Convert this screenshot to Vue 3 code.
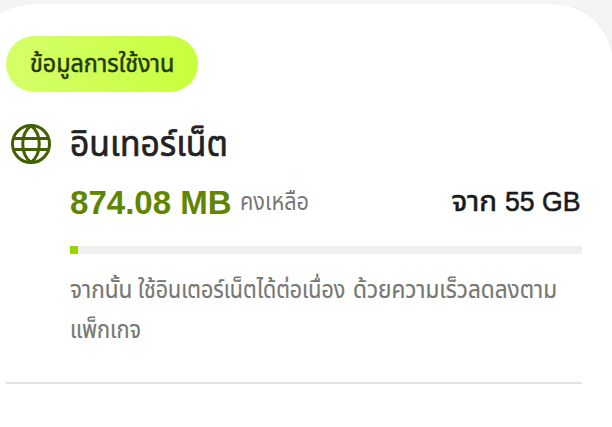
<script setup>
const usage = {
  badge: 'ข้อมูลการใช้งาน',
  title: 'อินเทอร์เน็ต',
  remaining: '874.08 MB',
  remainingLabel: 'คงเหลือ',
  totalLabel: 'จาก',
  total: '55 GB',
  note: ['จากนั้น', 'ใช้อินเตอร์เน็ตได้ต่อเนื่อง', 'ด้วยความเร็วลดลงตาม', 'แพ็กเกจ'],
  percent: 1.5625,
}
</script>

<template>
  <main class="screen">
    <section class="card">
      <div class="badge"><span class="badge-text">{{ usage.badge }}</span></div>
      <div class="usage">
        <svg class="globe" viewBox="0 0 42 42" fill="none" stroke="#445f00" stroke-width="3">
          <circle cx="21" cy="21" r="18.5" />
          <path d="M21 2.5C10 11 10 31 21 39.500M21 2.500C32 11 32 31 21 39.500M3.500 15.500h35M3.500 26.500h35" />
        </svg>
        <div class="details">
          <h1 class="title">{{ usage.title }}</h1>
          <div class="amounts">
            <strong class="remaining">{{ usage.remaining }}</strong>
            <span class="remaining-label">{{ usage.remainingLabel }}</span>
            <span class="total"><span class="total-label">{{ usage.totalLabel }}</span><span class="total-value">{{ usage.total }}</span></span>
          </div>
          <div class="track"><div class="fill" :style="{ width: usage.percent + '%' }"></div></div>
          <p class="note"><span v-for="part in usage.note" :key="part" class="note-part">{{ part }}</span></p>
        </div>
      </div>
      <hr class="divider" />
    </section>
  </main>
</template>

<style>
body { margin: 0; background: #f4f4f4; }
</style>

<style scoped>
.screen {
  box-sizing: border-box;
  width: 612px;
  height: 427px;
  padding-top: 4px;
  overflow: hidden;
  background: #f4f4f4;
  font-family: "Liberation Sans", "Noto Sans Thai", "Noto Sans", sans-serif;
}
.card {
  box-sizing: border-box;
  width: 640px;
  height: 520px;
  margin-left: -27px;
  padding: 32px 31px 0 33px;
  border-radius: 60px;
  background: #fff;
  box-shadow: 0 0 1px #ddd;
}
.badge {
  display: flex;
  align-items: center;
  justify-content: center;
  width: 192px;
  height: 56px;
  border-radius: 28px;
  background: linear-gradient(90deg, #d5ff6a, #c8ff3c);
  color: #243800;
  font-size: 24px;
}
.badge-text {
  white-space: nowrap;
  padding-top: 2px;
  transform: scaleX(0.973);
  -webkit-text-stroke: 0.5px currentColor;
}
.usage { display: flex; margin-top: 24px; height: 266px; }
.globe { width: 42px; height: 42px; margin: 7px 18px 0 4px; flex: none; }
.details { width: 512px; flex: none; }
.title {
  margin: 0;
  height: 56px;
  line-height: 56px;
  font-size: 36px;
  font-weight: 400;
  color: #222;
  white-space: nowrap;
  transform: scaleX(0.935);
  transform-origin: left;
  -webkit-text-stroke: 0.7px currentColor;
}
.amounts { display: flex; align-items: center; height: 60px; white-space: nowrap; }
.remaining {
  width: 162px;
  font-size: 34px;
  color: #608500;
  transform: scaleX(0.972);
  transform-origin: left;
}
.remaining-label {
  margin-left: 8px;
  padding-top: 2px;
  font-size: 24px;
  color: #777;
  transform: scaleX(0.905);
  transform-origin: left;
}
.total {
  display: flex;
  align-items: baseline;
  gap: 4px;
  margin-left: auto;
  margin-right: 2px;
  font-size: 28px;
  color: #1a1a1a;
  -webkit-text-stroke: 0.6px currentColor;
}
.total-label { transform: scaleX(1.06); transform-origin: right; }
.total-value { transform: scaleX(0.95); transform-origin: right; }
.track { height: 8px; margin-top: 14px; background: #efefed; }
.fill { height: 8px; background: #97d400; }
.note {
  display: grid;
  grid-template-columns: 68px 215px 1fr;
  margin: 16px 0 0;
  font-size: 24px;
  line-height: 40px;
  color: #777772;
  white-space: nowrap;
}
.note-part {
  justify-self: start;
  transform: scaleX(0.94);
  transform-origin: left;
  -webkit-text-stroke: 0.2px currentColor;
}
.note-part:nth-child(2) { width: 215px; transform: scaleX(0.893); }
.note-part:last-child { transform: scaleX(0.905); }
.divider { width: 576px; height: 2px; margin: 0; border: 0; background: #e2e2e2; }
</style>
